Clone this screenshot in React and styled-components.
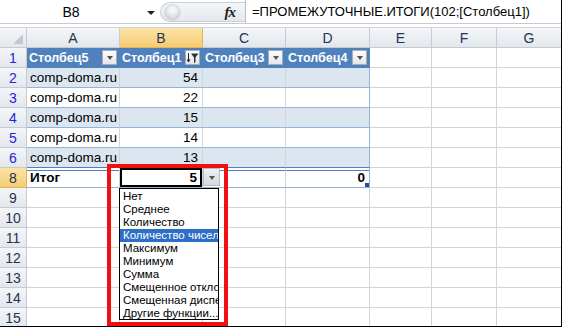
import styled, { createGlobalStyle, css } from "styled-components";

const GlobalStyle = createGlobalStyle`
  body {
    margin: 0;
    overflow: hidden;
    background: #fff;
  }
`;

const COLS = "27px 93px 83px 83px 84px 62px 65px 65px";

const Frame = styled.div`
  position: relative;
  width: 562px;
  height: 327px;
  box-sizing: border-box;
  border-right: 1px solid #000;
  border-bottom: 1px solid #000;
  overflow: hidden;
  background: #fff;
  font-family: "Liberation Sans", Arial, sans-serif;
`;

const FormulaBar = styled.div`
  display: flex;
  height: 24px;
  box-sizing: border-box;
  border-bottom: 1px solid #c5cad2;
`;

const NameBox = styled.div`
  position: relative;
  width: 160px;
  display: flex;
  align-items: center;
  justify-content: center;
  font-size: 14px;
  color: #000;
  padding-right: 18px;
  box-sizing: border-box;
`;

const NameArrow = styled.span`
  position: absolute;
  right: 5px;
  top: 11px;
  border-left: 4px solid transparent;
  border-right: 4px solid transparent;
  border-top: 4px solid #222;
`;

const FxArea = styled.div`
  width: 85px;
  margin: 2px 0 1px;
  display: flex;
  align-items: center;
  justify-content: space-between;
  padding: 0 10px 0 3px;
  box-sizing: border-box;
  background: linear-gradient(#f3f5f8, #e4e8ee);
  border: 1px solid #c9ced6;
  border-right: none;
  border-radius: 11px 0 0 11px;
`;

const Knob = styled.span`
  width: 15px;
  height: 15px;
  border-radius: 50%;
  background: radial-gradient(circle at 50% 35%, #f4f5f7 20%, #c9cdd3 80%);
  border: 1px solid #d8dbe0;
`;

const Fx = styled.span`
  font-family: "Liberation Serif", "Times New Roman", serif;
  font-style: italic;
  font-weight: bold;
  font-size: 15px;
  color: #222;
  letter-spacing: -1px;
`;

const FormulaInput = styled.div`
  flex: 1;
  display: flex;
  align-items: center;
  padding-left: 6px;
  border-left: 1px solid #b9bec6;
  font-size: 13px;
  color: #000;
  white-space: nowrap;
`;

const Spacer = styled.div`
  height: 3px;
  background: #fff;
  border-bottom: 1px solid #d2d6dc;
`;

const Row = styled.div`
  display: grid;
  grid-template-columns: ${COLS};
  height: 20px;
`;

const headBg = css`
  background: linear-gradient(#f4f6f8, #e3e7ec);
  border-right: 1px solid #c5cbd3;
  border-bottom: 1px solid #c5cbd3;
`;

const activeBg = css`
  background: linear-gradient(#fbe3a6, #f5cd73);
  border-right: 1px solid #e1b454;
  border-bottom: 1px solid #e1b454;
`;

const ColHead = styled.div`
  ${({ $active }) => ($active ? activeBg : headBg)};
  box-sizing: border-box;
  display: flex;
  align-items: center;
  justify-content: center;
  font-size: 14px;
  color: #1f3553;
`;

const Corner = styled.div`
  ${headBg};
  position: relative;
  box-sizing: border-box;
  &::after {
    content: "";
    position: absolute;
    right: 3px;
    bottom: 3px;
    border-left: 10px solid transparent;
    border-bottom: 10px solid #c4c9d0;
  }
`;

const RowHead = styled.div`
  ${({ $active }) => ($active ? activeBg : headBg)};
  box-sizing: border-box;
  display: flex;
  align-items: center;
  justify-content: center;
  font-size: 14px;
  color: ${({ $filtered }) => ($filtered ? "#2525d8" : "#1f3553")};
`;

const bands = {
  head: css`
    background: #4f81bd;
    color: #fff;
    font-weight: bold;
    font-size: 12.5px;
    padding-left: 2px;
    border-right-color: #4f81bd;
    border-bottom-color: #4f81bd;
  `,
  even: css`
    background: #dce6f1;
    border-bottom-color: #95b3d7;
  `,
  odd: css`
    background: #fff;
    border-bottom-color: #95b3d7;
  `,
  last: css`
    background: #dce6f1;
    border-bottom-color: #4f81bd;
  `,
  total: css`
    background: #fff;
    font-weight: bold;
    border-bottom-color: #95b3d7;
    box-shadow: inset 0 2px 0 #fff, inset 0 3px 0 #4f81bd;
  `,
};

const Cell = styled.div`
  position: relative;
  box-sizing: border-box;
  border-right: 1px solid #d4d4d4;
  border-bottom: 1px solid #d4d4d4;
  display: flex;
  align-items: center;
  justify-content: ${({ $right }) => ($right ? "flex-end" : "flex-start")};
  padding: 0 4px 0 3px;
  font-size: 13.5px;
  color: #000;
  white-space: nowrap;
  overflow: visible;
  ${({ $band }) => bands[$band] || ""};
  ${({ $edge }) =>
    $edge &&
    css`
      border-right-color: #95b3d7;
    `};
  ${({ $selected }) =>
    $selected &&
    css`
      box-shadow: inset 0 0 0 2px #000;
      padding-right: 5px;
    `};
`;

const FilterButton = styled.span`
  position: absolute;
  right: 2px;
  top: 2px;
  width: 15px;
  height: 15px;
  box-sizing: border-box;
  background: linear-gradient(#fdfdfd, #e4e6e9);
  border: 1px solid #a9adb3;
  display: flex;
  align-items: center;
  justify-content: center;
`;

const Tri = styled.span`
  border-left: 3.5px solid transparent;
  border-right: 3.5px solid transparent;
  border-top: 4px solid #555;
  margin-top: 1px;
`;

const CellDrop = styled.span`
  position: absolute;
  left: calc(100% + 1px);
  top: 0;
  width: 17px;
  height: 18px;
  box-sizing: border-box;
  background: linear-gradient(#eef0f3, #d6dade);
  border: 1px solid #b7bcc3;
  display: flex;
  align-items: center;
  justify-content: center;
  z-index: 2;
`;

const Handle = styled.span`
  position: absolute;
  right: 0;
  bottom: 0;
  width: 4px;
  height: 4px;
  background: #2c4f8f;
`;

const List = styled.div`
  position: absolute;
  left: 119px;
  top: 188px;
  width: 100px;
  height: 132px;
  box-sizing: border-box;
  border: 1px solid #000;
  background: #fff;
  padding-top: 1px;
  z-index: 3;
`;

const Item = styled.div`
  height: 13px;
  line-height: 13px;
  padding-left: 3px;
  font-size: 11.5px;
  white-space: nowrap;
  overflow: hidden;
  color: ${({ $hot }) => ($hot ? "#fff" : "#000")};
  background: ${({ $hot }) => ($hot ? "#2b6fc6" : "transparent")};
`;

const RedBox = styled.div`
  position: absolute;
  left: 107px;
  top: 164px;
  width: 121px;
  height: 162px;
  box-sizing: border-box;
  border: 4px solid #f01010;
  pointer-events: none;
  z-index: 4;
`;

const SortFilterIcon = () => (
  <svg width="13" height="12" viewBox="0 0 13 12">
    <path d="M2.5 1v9" stroke="#222" strokeWidth="1" />
    <path d="M0.5 7.5l2 3 2-3z" fill="#222" />
    <path d="M5 1.5h7.5l-3 4v4.5l-1.5 1v-5.5z" fill="#333" />
  </svg>
);

const columns = ["A", "B", "C", "D", "E", "F", "G"];
const headers = ["Столбец5", "Столбец1", "Столбец3", "Столбец4"];
const values = [54, 22, 15, 14, 13];
const items = [
  "Нет",
  "Среднее",
  "Количество",
  "Количество чисел",
  "Максимум",
  "Минимум",
  "Сумма",
  "Смещенное отклонение",
  "Смещенная дисперсия",
  "Другие функции...",
];

const Blank = () => (
  <>
    <Cell />
    <Cell />
    <Cell />
  </>
);

export default function App() {
  return (
    <>
      <GlobalStyle />
      <Frame>
        <FormulaBar>
          <NameBox>
            B8
            <NameArrow />
          </NameBox>
          <FxArea>
            <Knob />
            <Fx>fx</Fx>
          </FxArea>
          <FormulaInput>=ПРОМЕЖУТОЧНЫЕ.ИТОГИ(102;[Столбец1])</FormulaInput>
        </FormulaBar>
        <Spacer />

        <Row>
          <Corner />
          {columns.map((c) => (
            <ColHead key={c} $active={c === "B"}>
              {c}
            </ColHead>
          ))}
        </Row>

        <Row>
          <RowHead $filtered>1</RowHead>
          {headers.map((h, i) => (
            <Cell key={h} $band="head">
              {h}
              <FilterButton>{i === 1 ? <SortFilterIcon /> : <Tri />}</FilterButton>
            </Cell>
          ))}
          <Blank />
        </Row>

        {values.map((v, i) => {
          const band = i === 4 ? "last" : i % 2 === 0 ? "even" : "odd";
          return (
            <Row key={v}>
              <RowHead $filtered>{i + 2}</RowHead>
              <Cell $band={band}>comp-doma.ru</Cell>
              <Cell $band={band} $right>
                {v}
              </Cell>
              <Cell $band={band} />
              <Cell $band={band} $edge />
              <Blank />
            </Row>
          );
        })}

        <Row>
          <RowHead $active>8</RowHead>
          <Cell $band="total">Итог</Cell>
          <Cell $band="total" $right $selected>
            5
            <CellDrop>
              <Tri />
            </CellDrop>
          </Cell>
          <Cell $band="total" />
          <Cell $band="total" $right $edge>
            0
            <Handle />
          </Cell>
          <Blank />
        </Row>

        {[9, 10, 11, 12, 13, 14, 15].map((n) => (
          <Row key={n}>
            <RowHead>{n}</RowHead>
            <Cell />
            <Cell />
            <Cell />
            <Cell />
            <Blank />
          </Row>
        ))}

        <List>
          {items.map((t, i) => (
            <Item key={t} $hot={i === 3}>
              {t}
            </Item>
          ))}
        </List>
        <RedBox />
      </Frame>
    </>
  );
}
